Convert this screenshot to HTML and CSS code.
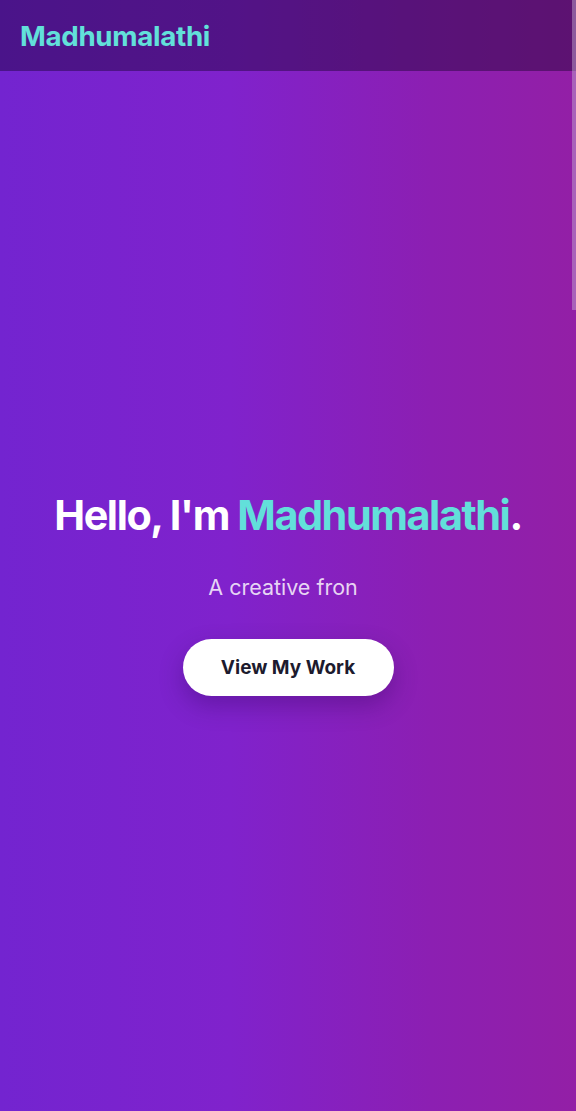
FILE: index.html
```html
<!DOCTYPE html>
<html lang="en">
<head>
<meta charset="utf-8">
<meta name="viewport" content="width=device-width, initial-scale=1">
<title>Madhumalathi</title>
<link rel="stylesheet" href="styles.css">
</head>
<body>
<div class="page">
  <header class="site-header">
    <a class="logo" href="#">Madhumalathi</a>
  </header>
  <main class="hero">
    <h1 class="hero-title">Hello, I'm <span class="accent">Madhumalathi</span>.</h1>
    <p class="hero-sub">A creative fron</p>
    <a class="btn" href="#">View My Work</a>
  </main>
</div>
<div class="scroll-thumb"></div>
</body>
</html>
```
FILE: styles.css
```css
* { box-sizing: border-box; }
html, body {
  margin: 0;
  padding: 0;
  height: 100%;
  overflow: hidden;
}
body {
  font-family: Inter, "Noto Sans", sans-serif;
  background: linear-gradient(90deg, #7324d0 0%, #8022cc 40%, #8c1fb2 75%, #931fa6 100%);
  color: #fff;
}
.page {
  min-height: 100vh;
  display: flex;
  flex-direction: column;
}
.site-header {
  height: 71px;
  display: flex;
  align-items: center;
  padding: 0 20px;
  background: rgba(20, 0, 40, 0.42);
}
.logo {
  font-size: 27.7px;
  font-weight: 700;
  color: #62e0da;
  text-decoration: none;
  letter-spacing: -0.3px;
}
.hero {
  flex: 1;
  display: flex;
  flex-direction: column;
  align-items: center;
  justify-content: center;
  text-align: center;
  padding-top: 5px;
}
.hero-title {
  margin: 0;
  font-size: 41.3px;
  font-weight: 700;
  letter-spacing: -1.4px;
  line-height: 1.2;
}
.accent { color: #62e0da; }
.hero-sub {
  margin: 35px 0 38px;
  padding-right: 10px;
  font-size: 21.5px;
  line-height: 1.2;
  color: rgba(255, 255, 255, 0.82);
}
.btn {
  display: inline-flex;
  align-items: center;
  justify-content: center;
  width: 211px;
  height: 57px;
  border-radius: 29px;
  background: #fff;
  color: #1d1b2e;
  font-size: 19px;
  font-weight: 700;
  text-decoration: none;
  box-shadow: 0 10px 24px rgba(40, 0, 80, 0.3);
}
.scroll-thumb {
  position: fixed;
  top: 0;
  right: 0;
  width: 4px;
  height: 310px;
  background: rgba(200, 180, 210, 0.45);
}
```
